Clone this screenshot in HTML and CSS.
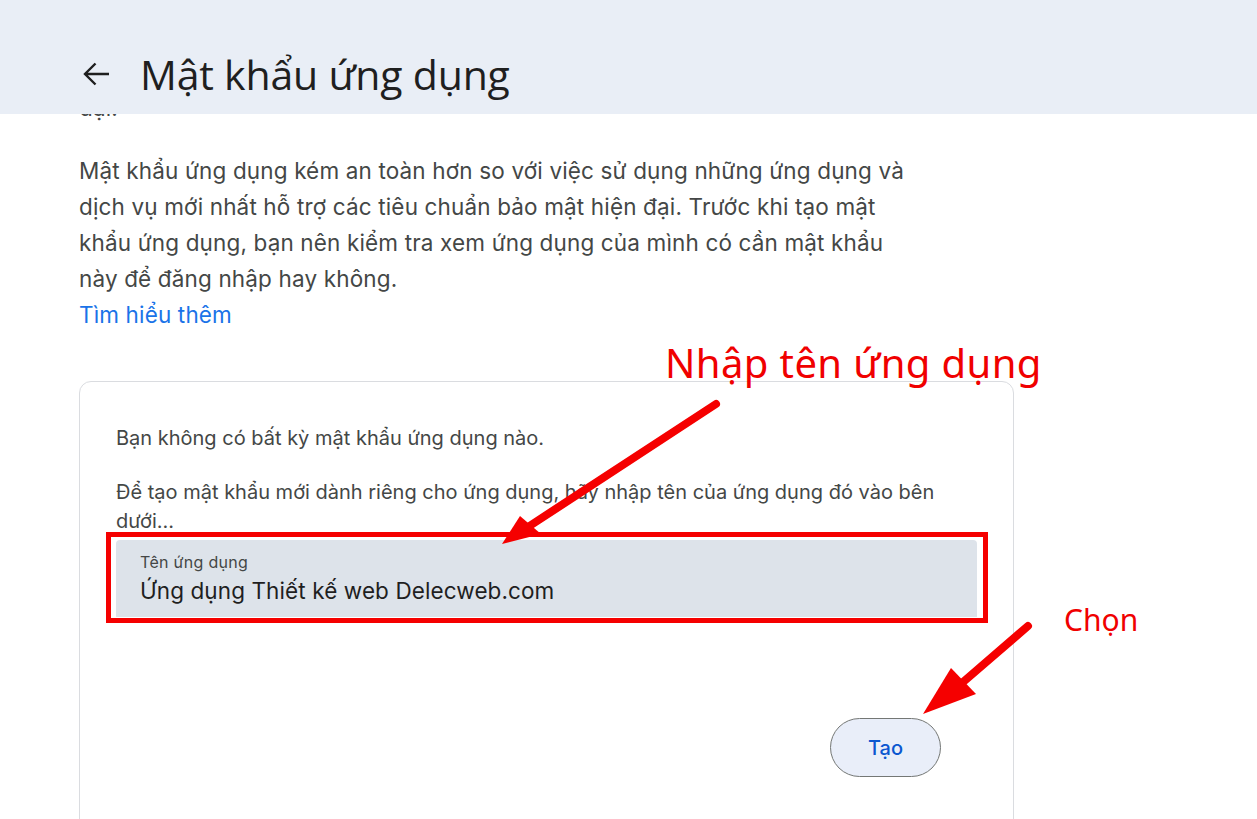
FILE: index.html
```html
<!DOCTYPE html>
<html lang="vi">
<head>
<meta charset="utf-8">
<title>Mật khẩu ứng dụng</title>
<link rel="stylesheet" href="styles.css">
</head>
<body>
<header class="topbar">
  <svg class="back" viewBox="0 0 24 24" width="36" height="36" aria-hidden="true">
    <path d="M20 12H4.8M11 5l-7 7 7 7" fill="none" stroke="#1f1f1f" stroke-width="1.6"/>
  </svg>
  <h1 class="title">Mật khẩu ứng dụng</h1>
</header>
<main class="content">
  <p class="para cut">đại.</p>
  <p class="para">Mật khẩu ứng dụng kém an toàn hơn so với việc sử dụng những ứng dụng và dịch vụ mới nhất hỗ trợ các tiêu chuẩn bảo mật hiện đại. Trước khi tạo mật khẩu ứng dụng, bạn nên kiểm tra xem ứng dụng của mình có cần mật khẩu này để đăng nhập hay không.<br><a class="link" href="#">Tìm hiểu thêm</a></p>
  <section class="card">
    <p class="card-text">Bạn không có bất kỳ mật khẩu ứng dụng nào.</p>
    <p class="card-text second">Để tạo mật khẩu mới dành riêng cho ứng dụng, hãy nhập tên của ứng dụng đó vào bên dưới...</p>
    <div class="field">
      <span class="field-label">Tên ứng dụng</span>
      <span class="field-value">Ứng dụng Thiết kế web Delecweb.com</span>
    </div>
    <div class="actions">
      <button class="btn" type="button">Tạo</button>
    </div>
  </section>
</main>
<div class="annot">
  <svg class="annot-svg" width="1257" height="819" viewBox="0 0 1257 819" aria-hidden="true">
    <rect x="108.5" y="534.5" width="877" height="86" fill="none" stroke="#f50000" stroke-width="5"/>
    <line x1="716" y1="404" x2="528" y2="527" stroke="#f50000" stroke-width="8" stroke-linecap="round"/>
    <polygon points="502,544 520,516 541,534" fill="#f50000"/>
    <line x1="1028" y1="626" x2="955" y2="689" stroke="#f50000" stroke-width="8" stroke-linecap="round"/>
    <polygon points="923,714 951,668 976,694" fill="#f50000"/>
  </svg>
  <div class="note note-1">Nhập tên ứng dụng</div>
  <div class="note note-2">Chọn</div>
</div>
</body>
</html>
```

FILE: styles.css
```css
html, body {
  margin: 0;
  padding: 0;
  background: #ffffff;
  overflow: hidden;
}
body {
  width: 1257px;
  height: 819px;
  position: relative;
  font-family: Inter, Roboto, "Liberation Sans", sans-serif;
  color: #444746;
}
.topbar {
  position: absolute;
  top: 0;
  left: 0;
  right: 0;
  height: 114px;
  background: #e9eef6;
  display: flex;
  align-items: center;
  padding: 34px 0 0 79px;
  box-sizing: border-box;
  z-index: 2;
}
.back {
  display: block;
  width: 36px;
  height: 36px;
  margin-right: 25px;
}
.title {
  margin: 0;
  font-family: "Open Sans", sans-serif;
  font-weight: 400;
  font-size: 41px;
  letter-spacing: -0.2px;
  color: #1f1f1f;
  line-height: 1;
}
.content {
  padding: 90px 0 0 79px;
}
.para {
  margin: 0 0 27px;
  width: 838px;
  font-size: 22.5px;
  letter-spacing: 0.15px;
  line-height: 36px;
}
.link {
  color: #1a73e8;
  text-decoration: none;
}
.card {
  margin-top: 48px;
  width: 935px;
  height: 500px;
  box-sizing: border-box;
  border: 1px solid #dadce0;
  border-radius: 12px;
  padding: 42px 36px 0;
}
.card-text {
  margin: 0;
  font-size: 20px;
  line-height: 29px;
  color: #444746;
}
.card-text.second {
  margin-top: 25px;
}
.field {
  margin-top: 4px;
  height: 77px;
  background: #dde3ea;
  border-radius: 4px 4px 0 0;
  padding: 12px 24px 0;
  box-sizing: border-box;
  display: flex;
  flex-direction: column;
}
.field-label {
  font-size: 16px;
  letter-spacing: 0.3px;
  line-height: 20px;
  color: #444746;
}
.field-value {
  margin-top: 3px;
  font-size: 22.5px;
  letter-spacing: 0.1px;
  line-height: 32px;
  color: #1f1f1f;
}
.actions {
  display: flex;
  justify-content: flex-end;
  padding: 101px 36px 0 0;
}
.btn {
  width: 111px;
  height: 59px;
  border-radius: 30px;
  border: 1px solid #747775;
  background: #e9eef9;
  color: #0b57d0;
  font-family: Inter, Roboto, sans-serif;
  font-weight: 500;
  font-size: 20px;
  padding: 0;
}
.annot {
  position: absolute;
  top: 0;
  left: 0;
  width: 1257px;
  height: 819px;
  pointer-events: none;
  z-index: 3;
}
.annot-svg {
  position: absolute;
  top: 0;
  left: 0;
}
.note {
  position: absolute;
  color: #f00000;
  font-family: "Noto Sans", "Open Sans", sans-serif;
  line-height: 1;
  white-space: nowrap;
}
.note-1 {
  left: 665px;
  top: 343px;
  font-size: 40px;
  letter-spacing: 0.4px;
}
.note-2 {
  left: 1064px;
  top: 605px;
  font-size: 30px;
}
```
